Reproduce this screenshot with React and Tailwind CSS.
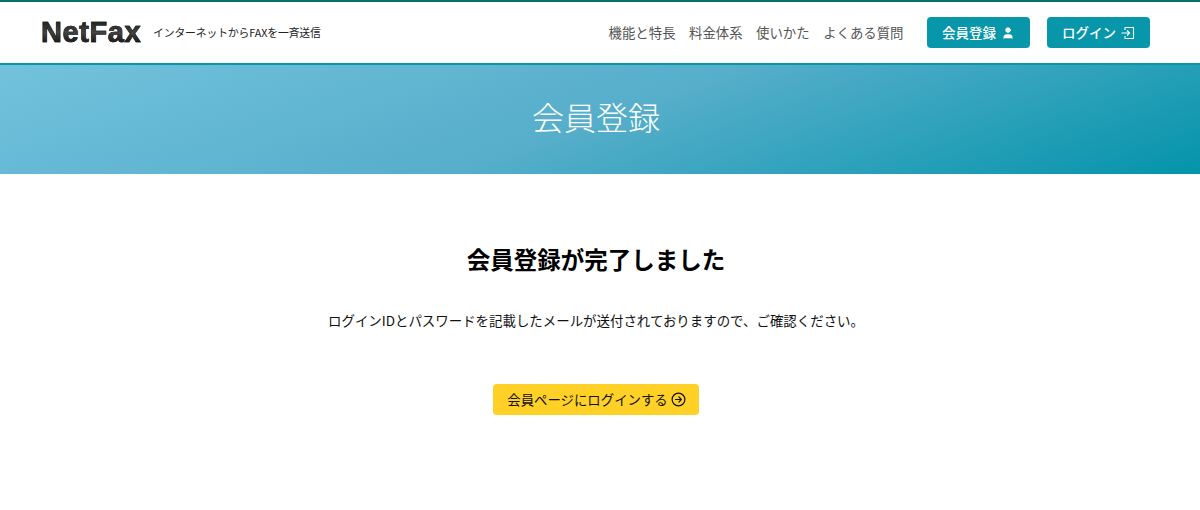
import { User } from 'lucide-react';

const font = { fontFamily: '"Noto Sans CJK JP", "Noto Sans", sans-serif' };

const ArrowCircle = () => (
  <svg className="w-[15px] h-[15px]" viewBox="0 0 16 16" fill="none" stroke="currentColor" strokeWidth="1.3" strokeLinecap="round" strokeLinejoin="round">
    <circle cx="8" cy="8" r="6.8" />
    <path d="M4.8 8h6.2M8.4 5.2 11 8l-2.6 2.8" />
  </svg>
);

const LoginBox = () => (
  <svg className="w-[14px] h-[14px]" viewBox="0 0 14 14" fill="none" stroke="currentColor" strokeWidth="1.1" strokeLinejoin="round">
    <path d="M4 4V1.5h8.5v11H4V10" />
    <path d="M0.5 7H8.5M6 4.5 8.5 7 6 9.5" />
  </svg>
);

const navItems = ['機能と特長', '料金体系', '使いかた', 'よくある質問'];

export default function App() {
  return (
    <div className="h-[510px] bg-white text-black overflow-hidden" style={font}>
      <header className="h-[65px] border-t-2 border-t-[#0b6d72] border-b-2 border-b-[#0896ab] bg-white pl-[41px] pr-[50px] flex items-center justify-between">
        <div className="flex items-center">
          <span className="w-[100px] text-[29px] leading-none font-bold tracking-[0.6px] [-webkit-text-stroke:0.6px_#1a1a1a] bg-gradient-to-b from-[#1a1a1a] via-[#444444] to-[#0a0a0a] bg-clip-text text-transparent font-['Liberation_Sans',sans-serif]">
            NetFax
          </span>
          <span className="ml-[12px] text-[10.8px] text-[#222222] tracking-[-0.1px]">インターネットからFAXを一斉送信</span>
        </div>
        <nav className="flex items-center">
          {navItems.map((item) => (
            <a key={item} className="mr-[13.5px] text-[13.4px] text-[#555555]">
              {item}
            </a>
          ))}
          <a className="ml-[10px] w-[103px] h-[31px] rounded bg-[#0896ab] text-white text-[13.5px] font-medium flex items-center justify-center gap-[5px]">
            会員登録
            <User className="w-[14px] h-[14px]" fill="currentColor" strokeWidth={1.5} />
          </a>
          <a className="ml-[17px] w-[103px] h-[31px] rounded bg-[#0896ab] text-white text-[13.5px] font-medium flex items-center justify-center gap-[5px]">
            ログイン
            <LoginBox />
          </a>
        </nav>
      </header>

      <section className="h-[109px] bg-[linear-gradient(160deg,#72c2dd_0%,#56aeca_50%,#0494ab_100%)] pr-2 pb-2 flex items-center justify-center">
        <h1 className="text-[32px] font-extralight text-white leading-none">会員登録</h1>
      </section>

      <main className="pr-2 flex flex-col items-center">
        <h2 className="mt-[67px] text-[23.5px] leading-[36px] font-bold">会員登録が完了しました</h2>
        <p className="mt-[31px] text-[13.45px] leading-[24px] text-[#111111]">
          ログインIDとパスワードを記載したメールが送付されておりますので、ご確認ください。
        </p>
        <a className="mt-[52px] w-[206px] h-[31px] rounded bg-[#ffd026] text-[13.4px] text-[#111111] flex items-center justify-center gap-[3px] pl-[1px]">
          会員ページにログインする
          <ArrowCircle />
        </a>
      </main>
    </div>
  );
}
